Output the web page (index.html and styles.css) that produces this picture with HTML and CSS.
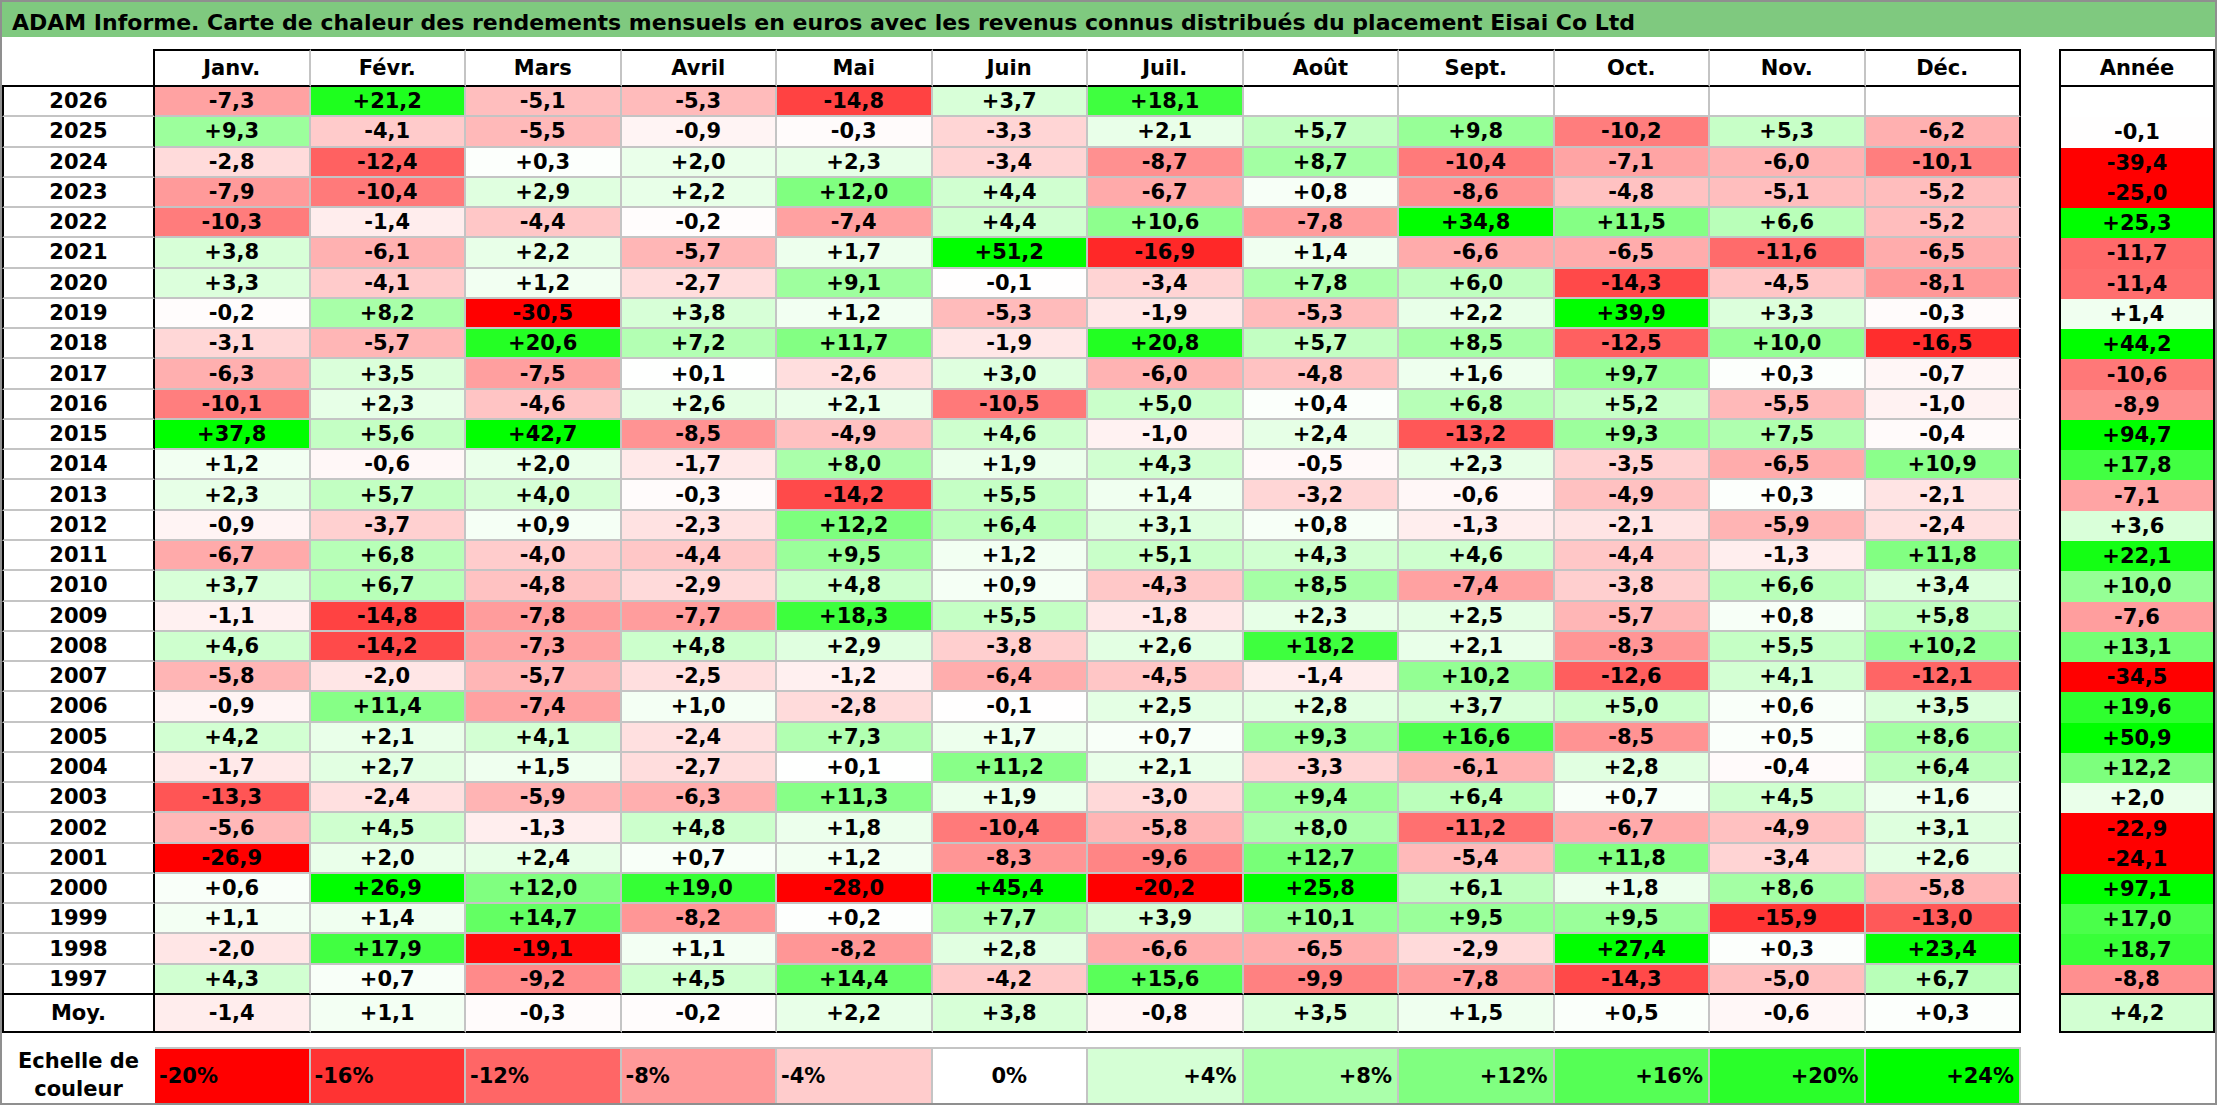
FILE: index.html
```html
<!DOCTYPE html>
<html lang="fr">
<head>
<meta charset="utf-8">
<title>ADAM Informe - Eisai Co Ltd</title>
<link rel="stylesheet" href="styles.css">
</head>
<body>
<div class="frame">
  <div class="title">ADAM Informe. Carte de chaleur des rendements mensuels en euros avec les revenus connus distribués du placement Eisai Co Ltd</div>
  <div class="sheet">
    <div class="row head">
      <div class="c corner"></div>
      <div class="c mh">Janv.</div><div class="c mh">Févr.</div><div class="c mh">Mars</div><div class="c mh">Avril</div><div class="c mh">Mai</div><div class="c mh">Juin</div><div class="c mh">Juil.</div><div class="c mh">Août</div><div class="c mh">Sept.</div><div class="c mh">Oct.</div><div class="c mh">Nov.</div><div class="c mh last">Déc.</div>
      <div class="c yh">Année</div>
    </div>
    <div class="data">
      <div class="row"><div class="c yr">2026</div><div class="c v">-7,3</div><div class="c v">+21,2</div><div class="c v">-5,1</div><div class="c v">-5,3</div><div class="c v">-14,8</div><div class="c v">+3,7</div><div class="c v">+18,1</div><div class="c v"></div><div class="c v"></div><div class="c v"></div><div class="c v"></div><div class="c v last"></div><div class="c ya"></div></div>
      <div class="row"><div class="c yr">2025</div><div class="c v">+9,3</div><div class="c v">-4,1</div><div class="c v">-5,5</div><div class="c v">-0,9</div><div class="c v">-0,3</div><div class="c v">-3,3</div><div class="c v">+2,1</div><div class="c v">+5,7</div><div class="c v">+9,8</div><div class="c v">-10,2</div><div class="c v">+5,3</div><div class="c v last">-6,2</div><div class="c ya">-0,1</div></div>
      <div class="row"><div class="c yr">2024</div><div class="c v">-2,8</div><div class="c v">-12,4</div><div class="c v">+0,3</div><div class="c v">+2,0</div><div class="c v">+2,3</div><div class="c v">-3,4</div><div class="c v">-8,7</div><div class="c v">+8,7</div><div class="c v">-10,4</div><div class="c v">-7,1</div><div class="c v">-6,0</div><div class="c v last">-10,1</div><div class="c ya">-39,4</div></div>
      <div class="row"><div class="c yr">2023</div><div class="c v">-7,9</div><div class="c v">-10,4</div><div class="c v">+2,9</div><div class="c v">+2,2</div><div class="c v">+12,0</div><div class="c v">+4,4</div><div class="c v">-6,7</div><div class="c v">+0,8</div><div class="c v">-8,6</div><div class="c v">-4,8</div><div class="c v">-5,1</div><div class="c v last">-5,2</div><div class="c ya">-25,0</div></div>
      <div class="row"><div class="c yr">2022</div><div class="c v">-10,3</div><div class="c v">-1,4</div><div class="c v">-4,4</div><div class="c v">-0,2</div><div class="c v">-7,4</div><div class="c v">+4,4</div><div class="c v">+10,6</div><div class="c v">-7,8</div><div class="c v">+34,8</div><div class="c v">+11,5</div><div class="c v">+6,6</div><div class="c v last">-5,2</div><div class="c ya">+25,3</div></div>
      <div class="row"><div class="c yr">2021</div><div class="c v">+3,8</div><div class="c v">-6,1</div><div class="c v">+2,2</div><div class="c v">-5,7</div><div class="c v">+1,7</div><div class="c v">+51,2</div><div class="c v">-16,9</div><div class="c v">+1,4</div><div class="c v">-6,6</div><div class="c v">-6,5</div><div class="c v">-11,6</div><div class="c v last">-6,5</div><div class="c ya">-11,7</div></div>
      <div class="row"><div class="c yr">2020</div><div class="c v">+3,3</div><div class="c v">-4,1</div><div class="c v">+1,2</div><div class="c v">-2,7</div><div class="c v">+9,1</div><div class="c v">-0,1</div><div class="c v">-3,4</div><div class="c v">+7,8</div><div class="c v">+6,0</div><div class="c v">-14,3</div><div class="c v">-4,5</div><div class="c v last">-8,1</div><div class="c ya">-11,4</div></div>
      <div class="row"><div class="c yr">2019</div><div class="c v">-0,2</div><div class="c v">+8,2</div><div class="c v">-30,5</div><div class="c v">+3,8</div><div class="c v">+1,2</div><div class="c v">-5,3</div><div class="c v">-1,9</div><div class="c v">-5,3</div><div class="c v">+2,2</div><div class="c v">+39,9</div><div class="c v">+3,3</div><div class="c v last">-0,3</div><div class="c ya">+1,4</div></div>
      <div class="row"><div class="c yr">2018</div><div class="c v">-3,1</div><div class="c v">-5,7</div><div class="c v">+20,6</div><div class="c v">+7,2</div><div class="c v">+11,7</div><div class="c v">-1,9</div><div class="c v">+20,8</div><div class="c v">+5,7</div><div class="c v">+8,5</div><div class="c v">-12,5</div><div class="c v">+10,0</div><div class="c v last">-16,5</div><div class="c ya">+44,2</div></div>
      <div class="row"><div class="c yr">2017</div><div class="c v">-6,3</div><div class="c v">+3,5</div><div class="c v">-7,5</div><div class="c v">+0,1</div><div class="c v">-2,6</div><div class="c v">+3,0</div><div class="c v">-6,0</div><div class="c v">-4,8</div><div class="c v">+1,6</div><div class="c v">+9,7</div><div class="c v">+0,3</div><div class="c v last">-0,7</div><div class="c ya">-10,6</div></div>
      <div class="row"><div class="c yr">2016</div><div class="c v">-10,1</div><div class="c v">+2,3</div><div class="c v">-4,6</div><div class="c v">+2,6</div><div class="c v">+2,1</div><div class="c v">-10,5</div><div class="c v">+5,0</div><div class="c v">+0,4</div><div class="c v">+6,8</div><div class="c v">+5,2</div><div class="c v">-5,5</div><div class="c v last">-1,0</div><div class="c ya">-8,9</div></div>
      <div class="row"><div class="c yr">2015</div><div class="c v">+37,8</div><div class="c v">+5,6</div><div class="c v">+42,7</div><div class="c v">-8,5</div><div class="c v">-4,9</div><div class="c v">+4,6</div><div class="c v">-1,0</div><div class="c v">+2,4</div><div class="c v">-13,2</div><div class="c v">+9,3</div><div class="c v">+7,5</div><div class="c v last">-0,4</div><div class="c ya">+94,7</div></div>
      <div class="row"><div class="c yr">2014</div><div class="c v">+1,2</div><div class="c v">-0,6</div><div class="c v">+2,0</div><div class="c v">-1,7</div><div class="c v">+8,0</div><div class="c v">+1,9</div><div class="c v">+4,3</div><div class="c v">-0,5</div><div class="c v">+2,3</div><div class="c v">-3,5</div><div class="c v">-6,5</div><div class="c v last">+10,9</div><div class="c ya">+17,8</div></div>
      <div class="row"><div class="c yr">2013</div><div class="c v">+2,3</div><div class="c v">+5,7</div><div class="c v">+4,0</div><div class="c v">-0,3</div><div class="c v">-14,2</div><div class="c v">+5,5</div><div class="c v">+1,4</div><div class="c v">-3,2</div><div class="c v">-0,6</div><div class="c v">-4,9</div><div class="c v">+0,3</div><div class="c v last">-2,1</div><div class="c ya">-7,1</div></div>
      <div class="row"><div class="c yr">2012</div><div class="c v">-0,9</div><div class="c v">-3,7</div><div class="c v">+0,9</div><div class="c v">-2,3</div><div class="c v">+12,2</div><div class="c v">+6,4</div><div class="c v">+3,1</div><div class="c v">+0,8</div><div class="c v">-1,3</div><div class="c v">-2,1</div><div class="c v">-5,9</div><div class="c v last">-2,4</div><div class="c ya">+3,6</div></div>
      <div class="row"><div class="c yr">2011</div><div class="c v">-6,7</div><div class="c v">+6,8</div><div class="c v">-4,0</div><div class="c v">-4,4</div><div class="c v">+9,5</div><div class="c v">+1,2</div><div class="c v">+5,1</div><div class="c v">+4,3</div><div class="c v">+4,6</div><div class="c v">-4,4</div><div class="c v">-1,3</div><div class="c v last">+11,8</div><div class="c ya">+22,1</div></div>
      <div class="row"><div class="c yr">2010</div><div class="c v">+3,7</div><div class="c v">+6,7</div><div class="c v">-4,8</div><div class="c v">-2,9</div><div class="c v">+4,8</div><div class="c v">+0,9</div><div class="c v">-4,3</div><div class="c v">+8,5</div><div class="c v">-7,4</div><div class="c v">-3,8</div><div class="c v">+6,6</div><div class="c v last">+3,4</div><div class="c ya">+10,0</div></div>
      <div class="row"><div class="c yr">2009</div><div class="c v">-1,1</div><div class="c v">-14,8</div><div class="c v">-7,8</div><div class="c v">-7,7</div><div class="c v">+18,3</div><div class="c v">+5,5</div><div class="c v">-1,8</div><div class="c v">+2,3</div><div class="c v">+2,5</div><div class="c v">-5,7</div><div class="c v">+0,8</div><div class="c v last">+5,8</div><div class="c ya">-7,6</div></div>
      <div class="row"><div class="c yr">2008</div><div class="c v">+4,6</div><div class="c v">-14,2</div><div class="c v">-7,3</div><div class="c v">+4,8</div><div class="c v">+2,9</div><div class="c v">-3,8</div><div class="c v">+2,6</div><div class="c v">+18,2</div><div class="c v">+2,1</div><div class="c v">-8,3</div><div class="c v">+5,5</div><div class="c v last">+10,2</div><div class="c ya">+13,1</div></div>
      <div class="row"><div class="c yr">2007</div><div class="c v">-5,8</div><div class="c v">-2,0</div><div class="c v">-5,7</div><div class="c v">-2,5</div><div class="c v">-1,2</div><div class="c v">-6,4</div><div class="c v">-4,5</div><div class="c v">-1,4</div><div class="c v">+10,2</div><div class="c v">-12,6</div><div class="c v">+4,1</div><div class="c v last">-12,1</div><div class="c ya">-34,5</div></div>
      <div class="row"><div class="c yr">2006</div><div class="c v">-0,9</div><div class="c v">+11,4</div><div class="c v">-7,4</div><div class="c v">+1,0</div><div class="c v">-2,8</div><div class="c v">-0,1</div><div class="c v">+2,5</div><div class="c v">+2,8</div><div class="c v">+3,7</div><div class="c v">+5,0</div><div class="c v">+0,6</div><div class="c v last">+3,5</div><div class="c ya">+19,6</div></div>
      <div class="row"><div class="c yr">2005</div><div class="c v">+4,2</div><div class="c v">+2,1</div><div class="c v">+4,1</div><div class="c v">-2,4</div><div class="c v">+7,3</div><div class="c v">+1,7</div><div class="c v">+0,7</div><div class="c v">+9,3</div><div class="c v">+16,6</div><div class="c v">-8,5</div><div class="c v">+0,5</div><div class="c v last">+8,6</div><div class="c ya">+50,9</div></div>
      <div class="row"><div class="c yr">2004</div><div class="c v">-1,7</div><div class="c v">+2,7</div><div class="c v">+1,5</div><div class="c v">-2,7</div><div class="c v">+0,1</div><div class="c v">+11,2</div><div class="c v">+2,1</div><div class="c v">-3,3</div><div class="c v">-6,1</div><div class="c v">+2,8</div><div class="c v">-0,4</div><div class="c v last">+6,4</div><div class="c ya">+12,2</div></div>
      <div class="row"><div class="c yr">2003</div><div class="c v">-13,3</div><div class="c v">-2,4</div><div class="c v">-5,9</div><div class="c v">-6,3</div><div class="c v">+11,3</div><div class="c v">+1,9</div><div class="c v">-3,0</div><div class="c v">+9,4</div><div class="c v">+6,4</div><div class="c v">+0,7</div><div class="c v">+4,5</div><div class="c v last">+1,6</div><div class="c ya">+2,0</div></div>
      <div class="row"><div class="c yr">2002</div><div class="c v">-5,6</div><div class="c v">+4,5</div><div class="c v">-1,3</div><div class="c v">+4,8</div><div class="c v">+1,8</div><div class="c v">-10,4</div><div class="c v">-5,8</div><div class="c v">+8,0</div><div class="c v">-11,2</div><div class="c v">-6,7</div><div class="c v">-4,9</div><div class="c v last">+3,1</div><div class="c ya">-22,9</div></div>
      <div class="row"><div class="c yr">2001</div><div class="c v">-26,9</div><div class="c v">+2,0</div><div class="c v">+2,4</div><div class="c v">+0,7</div><div class="c v">+1,2</div><div class="c v">-8,3</div><div class="c v">-9,6</div><div class="c v">+12,7</div><div class="c v">-5,4</div><div class="c v">+11,8</div><div class="c v">-3,4</div><div class="c v last">+2,6</div><div class="c ya">-24,1</div></div>
      <div class="row"><div class="c yr">2000</div><div class="c v">+0,6</div><div class="c v">+26,9</div><div class="c v">+12,0</div><div class="c v">+19,0</div><div class="c v">-28,0</div><div class="c v">+45,4</div><div class="c v">-20,2</div><div class="c v">+25,8</div><div class="c v">+6,1</div><div class="c v">+1,8</div><div class="c v">+8,6</div><div class="c v last">-5,8</div><div class="c ya">+97,1</div></div>
      <div class="row"><div class="c yr">1999</div><div class="c v">+1,1</div><div class="c v">+1,4</div><div class="c v">+14,7</div><div class="c v">-8,2</div><div class="c v">+0,2</div><div class="c v">+7,7</div><div class="c v">+3,9</div><div class="c v">+10,1</div><div class="c v">+9,5</div><div class="c v">+9,5</div><div class="c v">-15,9</div><div class="c v last">-13,0</div><div class="c ya">+17,0</div></div>
      <div class="row"><div class="c yr">1998</div><div class="c v">-2,0</div><div class="c v">+17,9</div><div class="c v">-19,1</div><div class="c v">+1,1</div><div class="c v">-8,2</div><div class="c v">+2,8</div><div class="c v">-6,6</div><div class="c v">-6,5</div><div class="c v">-2,9</div><div class="c v">+27,4</div><div class="c v">+0,3</div><div class="c v last">+23,4</div><div class="c ya">+18,7</div></div>
      <div class="row end"><div class="c yr">1997</div><div class="c v">+4,3</div><div class="c v">+0,7</div><div class="c v">-9,2</div><div class="c v">+4,5</div><div class="c v">+14,4</div><div class="c v">-4,2</div><div class="c v">+15,6</div><div class="c v">-9,9</div><div class="c v">-7,8</div><div class="c v">-14,3</div><div class="c v">-5,0</div><div class="c v last">+6,7</div><div class="c ya">-8,8</div></div>
    </div>
    <div class="row moy"><div class="c yr">Moy.</div><div class="c v">-1,4</div><div class="c v">+1,1</div><div class="c v">-0,3</div><div class="c v">-0,2</div><div class="c v">+2,2</div><div class="c v">+3,8</div><div class="c v">-0,8</div><div class="c v">+3,5</div><div class="c v">+1,5</div><div class="c v">+0,5</div><div class="c v">-0,6</div><div class="c v last">+0,3</div><div class="c ya">+4,2</div></div>
    <div class="row legend">
      <div class="c lgt">Echelle de<br>couleur</div>
      <div class="c lg l">-20%</div><div class="c lg l">-16%</div><div class="c lg l">-12%</div><div class="c lg l">-8%</div><div class="c lg l">-4%</div><div class="c lg m">0%</div><div class="c lg r">+4%</div><div class="c lg r">+8%</div><div class="c lg r">+12%</div><div class="c lg r">+16%</div><div class="c lg r">+20%</div><div class="c lg r">+24%</div>
    </div>
  </div>
</div>
<script src="script.js"></script>
</body>
</html>
```

FILE: styles.css
```css
* { box-sizing: border-box; margin: 0; padding: 0; }
html, body { width: 2217px; height: 1105px; overflow: hidden; background: #fff; }
body { font-family: "DejaVu Sans", "Liberation Sans", sans-serif; font-weight: bold; color: #000; }

.frame { width: 2217px; height: 1105px; border: 2px solid #8f8f8f; }

.title {
  height: 35px;
  padding: 6px 0 0 10px;
  line-height: 29px;
  font-size: 22px;
  background: #7fc97f;
  white-space: nowrap;
}

.sheet { margin-top: 12px; }

.row { display: grid; grid-template-columns: 153px repeat(12, 155.5px) 38px 156px; }
.head { height: 38px; }
.data { display: grid; grid-template-rows: repeat(30, 1fr); height: 908px; }
.moy { height: 38px; }
.legend { margin-top: 14px; height: 56px; }

.c {
  display: flex;
  align-items: center;
  justify-content: center;
  font-size: 21px;
  white-space: nowrap;
}

.corner { border-right: 2px solid #000; border-bottom: 2px solid #000; }
.mh { border-top: 2px solid #000; border-bottom: 2px solid #000; border-right: 2px solid #c4c4c4; }
.mh.last { border-right-color: #000; }
.yh { grid-column: 15; border: 2px solid #000; }

.yr { border-left: 2px solid #000; border-right: 2px solid #000; border-bottom: 2px solid #c4c4c4; }
.v { border-right: 2px solid #c4c4c4; border-bottom: 2px solid #c4c4c4; }
.v.last { border-right-color: #000; }
.ya { grid-column: 15; border-left: 2px solid #000; border-right: 2px solid #000; }

.end .c { border-bottom: 2px solid #000; }
.moy .c { border-bottom: 2px solid #000; }

.lgt { text-align: center; line-height: 28px; }
.lg { border-top: 2px solid #c4c4c4; border-right: 2px solid #c4c4c4; }
.lg.l { justify-content: flex-start; padding-left: 4px; }
.lg.m { justify-content: center; }
.lg.r { justify-content: flex-end; padding-right: 5px; }
```

FILE: script.js
```js
(function () {
  function heat(v) {
    if (isNaN(v)) return null;
    if (v < 0) {
      var t = Math.min(1, -v / 20);
      var g = Math.round(255 * (1 - t));
      return 'rgb(255,' + g + ',' + g + ')';
    }
    var k = Math.min(1, v / 24);
    var r = Math.round(255 * (1 - k));
    return 'rgb(' + r + ',255,' + r + ')';
  }
  var cells = document.querySelectorAll('.v, .ya, .lg');
  for (var i = 0; i < cells.length; i++) {
    var s = cells[i].textContent.trim().replace(',', '.').replace('%', '');
    if (!s) continue;
    var c = heat(parseFloat(s));
    if (c) cells[i].style.backgroundColor = c;
  }
})();
```
